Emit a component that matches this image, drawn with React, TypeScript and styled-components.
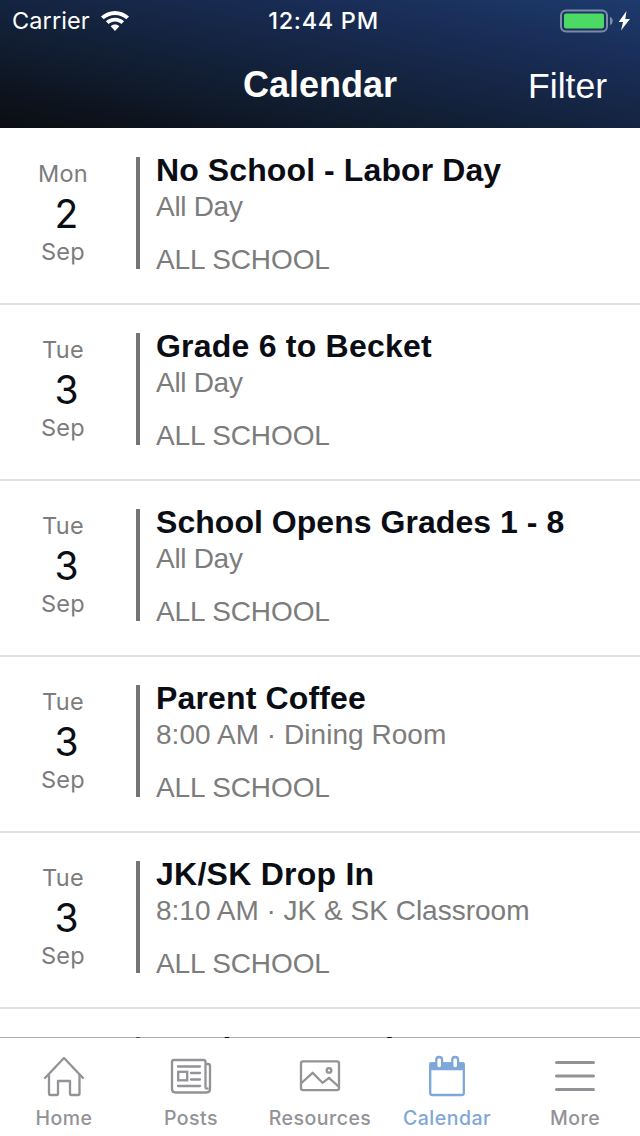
import React from "react";
import styled, { createGlobalStyle } from "styled-components";

const Global = createGlobalStyle`
  * { box-sizing: border-box; }
  html, body { margin: 0; padding: 0; background: #fff; }
  body { width: 640px; height: 1136px; overflow: hidden; }
`;

const sans = `"Liberation Sans", Arial, sans-serif`;
const system = `Inter, "Liberation Sans", sans-serif`;

const Screen = styled.div`
  width: 640px;
  height: 1136px;
  display: flex;
  flex-direction: column;
  overflow: hidden;
  background: #fff;
`;

const Header = styled.header`
  flex: none;
  height: 128px;
  color: #fff;
  background: linear-gradient(to top right, #0b0d12 0%, #0f1928 25%, #142440 50%, #192d57 75%, #1d3b6d 100%);
`;

const StatusBar = styled.div`
  height: 41px;
  padding: 0 9px 0 12px;
  display: grid;
  grid-template-columns: 1fr auto 1fr;
  align-items: center;
  font: 400 23.5px/42px ${system};
`;

const StatusSide = styled.div<{ $end?: boolean }>`
  display: flex;
  align-items: center;
  justify-content: ${(p) => (p.$end ? "flex-end" : "flex-start")};
`;

const Carrier = styled.span`
  letter-spacing: 0.1px;
  margin-right: 11px;
`;

const Clock = styled.span`
  padding-left: 4px;
  font-weight: 500;
  letter-spacing: 0.7px;
`;

const NavBar = styled.div`
  height: 87px;
  padding: 0 33px;
  display: grid;
  grid-template-columns: 1fr auto 1fr;
  align-items: center;
  font: 400 35.5px/87px ${sans};
`;

const NavTitle = styled.h1`
  margin: 0;
  padding-bottom: 3px;
  grid-column: 2;
  font: inherit;
  font-size: 36px;
  font-weight: 700;
`;

const NavAction = styled.span`
  justify-self: end;
  padding-top: 1px;
`;

const List = styled.main`
  flex: 1;
  min-height: 0;
  padding-top: 1px;
  overflow: hidden;
`;

const Row = styled.article`
  height: 176px;
  padding-top: 28px;
  display: flex;
  border-bottom: 2px solid #e1e1e1;
`;

const DateColumn = styled.div`
  width: 136px;
  padding-right: 10px;
  display: flex;
  flex-direction: column;
  align-items: center;
  font-family: ${system};
`;

const DateLabel = styled.span`
  font-size: 23.5px;
  line-height: 34px;
  letter-spacing: 0.25px;
  color: #7c7c7c;
`;

const DateNumber = styled.span`
  margin: 1px 0 -1px 7px;
  font-size: 39px;
  line-height: 44px;
  font-weight: 400;
  color: #0b0d14;
`;

const Rule = styled.div`
  width: 4px;
  height: 112px;
  background: #757575;
`;

const Details = styled.div`
  padding-left: 16px;
  display: flex;
  flex-direction: column;
  font-family: ${sans};
  white-space: nowrap;
`;

const Title = styled.h2<{ $spacing: number; $raised?: boolean }>`
  margin: ${(p) => (p.$raised ? "-7px" : "-6px")} 0 0;
  font-size: 32px;
  line-height: 38px;
  font-weight: 700;
  letter-spacing: ${(p) => p.$spacing}px;
  color: #0b0d14;
`;

const Meta = styled.span<{ $spacing?: number; $group?: boolean }>`
  margin-top: ${(p) => (p.$group ? "19px" : "1px")};
  font-size: 28px;
  line-height: 34px;
  letter-spacing: ${(p) => p.$spacing ?? 0}px;
  color: #7c7c7c;
`;

const TabBar = styled.nav`
  flex: none;
  position: relative;
  height: 99px;
  margin-top: -1px;
  display: grid;
  grid-template-columns: repeat(5, 1fr);
  border-top: 1px solid rgba(0, 0, 0, 0.32);
  background: #fff;
  background-clip: padding-box;
`;

const Tab = styled.div<{ $active?: boolean }>`
  padding-top: 14px;
  display: flex;
  flex-direction: column;
  align-items: center;
  color: ${(p) => (p.$active ? "#7fa7d9" : "#929297")};
`;

const TabIcon = styled.svg<{ $nudge: number }>`
  width: 48px;
  height: 48px;
  flex: none;
  margin-right: ${(p) => p.$nudge}px;
  fill: none;
  stroke: currentColor;
  stroke-width: 2.3;
  stroke-linecap: round;
  stroke-linejoin: round;
`;

const TabLabel = styled.span<{ $nudge: number }>`
  margin-top: 4px;
  margin-right: ${(p) => p.$nudge}px;
  font: 500 19.5px/28px ${system};
  letter-spacing: 0.5px;
`;

const WifiIcon = () => (
  <svg width="28" height="21" viewBox="0 0 28 21" fill="#fff">
    <path d="M14 0C8.600 0 3.700 2.100 0 5.600L2.700 8.300C5.700 5.500 9.600 3.900 14 3.900S22.300 5.500 25.300 8.300L28 5.600C24.300 2.100 19.400 0 14 0Z" />
    <path d="M14 6.800C10.500 6.800 7.300 8.100 4.900 10.300L7.600 13C9.300 11.500 11.500 10.600 14 10.600S18.700 11.500 20.400 13L23.100 10.300C20.700 8.100 17.500 6.800 14 6.800Z" />
    <path d="M14 13.500C12.300 13.500 10.800 14.200 9.700 15.200L14 20L18.300 15.200C17.200 14.200 15.700 13.500 14 13.500Z" />
  </svg>
);

const BatteryIcon = () => (
  <svg width="71" height="24" viewBox="0 0 71 24">
    <rect x="1" y="1.500" width="46" height="21" rx="5" fill="none" stroke="#fff" strokeOpacity="0.430" strokeWidth="2" />
    <rect x="4" y="4.500" width="40" height="15" rx="2" fill="#4cd964" />
    <path d="M50 8C53.600 9 53.600 15 50 16Z" fill="#fff" fillOpacity="0.430" />
    <path d="M66.500 2L58.700 13H63L61 21.500L70 10H65.300Z" fill="#fff" />
  </svg>
);

const events = [
  { day: "Mon", date: "2", title: "No School - Labor Day", ts: 0.1, meta: "All Day", ms: -0.3 },
  { day: "Tue", date: "3", title: "Grade 6 to Becket", ts: 0.22, meta: "All Day", ms: -0.3 },
  { day: "Tue", date: "3", title: "School Opens Grades 1 - 8", ts: 0.04, meta: "All Day", ms: -0.3 },
  { day: "Tue", date: "3", title: "Parent Coffee", ts: 0.15, meta: "8:00 AM · Dining Room", ms: 0.04 },
  { day: "Tue", date: "3", title: "JK/SK Drop In", ts: 0.25, meta: "8:10 AM · JK & SK Classroom", ms: 0 },
];

const tabs = [
  {
    label: "Home",
    nudge: 0,
    icon: (
      <>
        <path d="M5 26L24 6L43 26" />
        <path d="M9 23V41.500Q9 43 10.500 43H16.500Q18 43 18 41.500V29H30V41.500Q30 43 31.500 43H38Q39.500 43 39.500 41.500V23" />
      </>
    ),
  },
  {
    label: "Posts",
    nudge: 2,
    icon: (
      <>
        <path d="M40.500 36.500Q38.500 37 38.500 35V10Q38.500 8 36.500 8H7Q5 8 5 10V37Q5 40.500 8.500 40.500H39.500Q43 40.500 43 37V14Q43 12 41 12H38.500" />
        <path d="M11 14.500H33M24 21H33M24 27.500H33M11 34H33" />
        <rect x="11.200" y="19.800" width="9" height="8.500" strokeLinejoin="miter" />
      </>
    ),
  },
  {
    label: "Resources",
    nudge: 0,
    icon: (
      <>
        <rect x="5" y="9.300" width="38" height="28.800" rx="2" />
        <path d="M5.500 31L16.600 20.800L26.500 30.800L33 25.800L42.500 34.500" />
        <circle cx="33" cy="18.400" r="2.300" />
      </>
    ),
  },
  {
    label: "Calendar",
    nudge: 2,
    active: true,
    icon: (
      <>
        <rect x="7.200" y="11.500" width="33.600" height="31.500" rx="2" />
        <path d="M7.500 11.500H40.500V17H7.500Z" fill="currentColor" />
        <rect x="13.300" y="5" width="5.800" height="11.500" rx="2.900" fill="#fff" />
        <rect x="29.300" y="5" width="5.800" height="11.500" rx="2.900" fill="#fff" />
      </>
    ),
  },
  {
    label: "More",
    nudge: 2,
    icon: <path d="M5.600 10.500H42.400M5.600 24H42.400M5.600 37.500H42.400" strokeWidth="3.200" />,
  },
];

export default function App() {
  return (
    <Screen>
      <Global />
      <Header>
        <StatusBar>
          <StatusSide>
            <Carrier>Carrier</Carrier>
            <WifiIcon />
          </StatusSide>
          <Clock>12:44 PM</Clock>
          <StatusSide $end>
            <BatteryIcon />
          </StatusSide>
        </StatusBar>
        <NavBar>
          <NavTitle>Calendar</NavTitle>
          <NavAction>Filter</NavAction>
        </NavBar>
      </Header>
      <List>
        {events.map((e) => (
          <Row key={e.title}>
            <DateColumn>
              <DateLabel>{e.day}</DateLabel>
              <DateNumber>{e.date}</DateNumber>
              <DateLabel>Sep</DateLabel>
            </DateColumn>
            <Rule />
            <Details>
              <Title $spacing={e.ts}>{e.title}</Title>
              <Meta $spacing={e.ms}>{e.meta}</Meta>
              <Meta $group $spacing={-0.1}>ALL SCHOOL</Meta>
            </Details>
          </Row>
        ))}
        {/* Next event, just starting to scroll in behind the tab bar */}
        <Row>
          <DateColumn />
          <Rule />
          <Details>
            <Title $raised $spacing={0.22}>Grade 4 to Becket</Title>
          </Details>
        </Row>
      </List>
      <TabBar>
        {tabs.map((t) => (
          <Tab key={t.label} $active={t.active}>
            <TabIcon viewBox="0 0 48 48" $nudge={t.nudge}>{t.icon}</TabIcon>
            <TabLabel $nudge={t.nudge}>{t.label}</TabLabel>
          </Tab>
        ))}
      </TabBar>
    </Screen>
  );
}
